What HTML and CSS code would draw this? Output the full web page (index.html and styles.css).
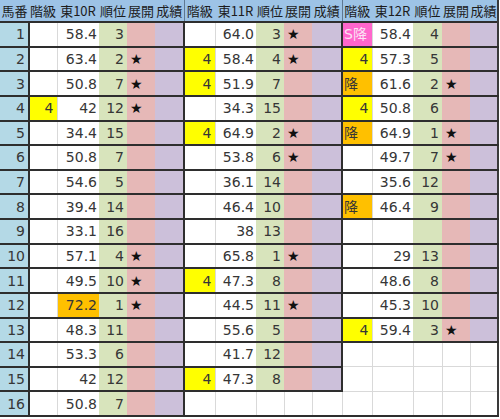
FILE: index.html
```html
<!DOCTYPE html>
<html lang="ja">
<head>
<meta charset="utf-8">
<title>馬番 表</title>
<link rel="stylesheet" href="styles.css">
</head>
<body>
<table class="sheet">
<colgroup>
<col class="w29"><col class="w28"><col class="w42"><col class="w28"><col class="w28"><col class="w29">
<col class="w31"><col class="w41"><col class="w28"><col class="w28"><col class="w30">
<col class="w30"><col class="w41"><col class="w29"><col class="w28"><col class="w28">
</colgroup>
<thead>
<tr>
<th>馬番</th><th>階級</th><th>東10R</th><th>順位</th><th>展開</th><th>成績</th>
<th class="b">階級</th><th>東11R</th><th>順位</th><th>展開</th><th>成績</th>
<th class="b">階級</th><th>東12R</th><th>順位</th><th>展開</th><th class="last">成績</th>
</tr>
</thead>
<tbody>
<tr>
<td class="n">1</td><td class="k"></td><td class="v">58.4</td><td class="r">3</td><td class="t"></td><td class="g"></td>
<td class="k"></td><td class="v">64.0</td><td class="r">3</td><td class="t">★</td><td class="g"></td>
<td class="k s">S降</td><td class="v">58.4</td><td class="r">4</td><td class="t"></td><td class="g last"></td>
</tr>
<tr>
<td class="n">2</td><td class="k"></td><td class="v">63.4</td><td class="r">2</td><td class="t">★</td><td class="g"></td>
<td class="k y">4</td><td class="v">58.4</td><td class="r">4</td><td class="t">★</td><td class="g"></td>
<td class="k y">4</td><td class="v">57.3</td><td class="r">5</td><td class="t"></td><td class="g last"></td>
</tr>
<tr>
<td class="n">3</td><td class="k"></td><td class="v">50.8</td><td class="r">7</td><td class="t">★</td><td class="g"></td>
<td class="k y">4</td><td class="v">51.9</td><td class="r">7</td><td class="t"></td><td class="g"></td>
<td class="k o">降</td><td class="v">61.6</td><td class="r">2</td><td class="t">★</td><td class="g last"></td>
</tr>
<tr>
<td class="n">4</td><td class="k y">4</td><td class="v">42</td><td class="r">12</td><td class="t">★</td><td class="g"></td>
<td class="k"></td><td class="v">34.3</td><td class="r">15</td><td class="t"></td><td class="g"></td>
<td class="k y">4</td><td class="v">50.8</td><td class="r">6</td><td class="t"></td><td class="g last"></td>
</tr>
<tr>
<td class="n">5</td><td class="k"></td><td class="v">34.4</td><td class="r">15</td><td class="t"></td><td class="g"></td>
<td class="k y">4</td><td class="v">64.9</td><td class="r">2</td><td class="t">★</td><td class="g"></td>
<td class="k o">降</td><td class="v">64.9</td><td class="r">1</td><td class="t">★</td><td class="g last"></td>
</tr>
<tr>
<td class="n">6</td><td class="k"></td><td class="v">50.8</td><td class="r">7</td><td class="t"></td><td class="g"></td>
<td class="k"></td><td class="v">53.8</td><td class="r">6</td><td class="t">★</td><td class="g"></td>
<td class="k"></td><td class="v">49.7</td><td class="r">7</td><td class="t">★</td><td class="g last"></td>
</tr>
<tr>
<td class="n">7</td><td class="k"></td><td class="v">54.6</td><td class="r">5</td><td class="t"></td><td class="g"></td>
<td class="k"></td><td class="v">36.1</td><td class="r">14</td><td class="t"></td><td class="g"></td>
<td class="k"></td><td class="v">35.6</td><td class="r">12</td><td class="t"></td><td class="g last"></td>
</tr>
<tr>
<td class="n">8</td><td class="k"></td><td class="v">39.4</td><td class="r">14</td><td class="t"></td><td class="g"></td>
<td class="k"></td><td class="v">46.4</td><td class="r">10</td><td class="t"></td><td class="g"></td>
<td class="k o">降</td><td class="v">46.4</td><td class="r">9</td><td class="t"></td><td class="g last"></td>
</tr>
<tr>
<td class="n">9</td><td class="k"></td><td class="v">33.1</td><td class="r">16</td><td class="t"></td><td class="g"></td>
<td class="k"></td><td class="v">38</td><td class="r">13</td><td class="t"></td><td class="g"></td>
<td class="k"></td><td class="v"></td><td class="r"></td><td class="t"></td><td class="g last"></td>
</tr>
<tr>
<td class="n">10</td><td class="k"></td><td class="v">57.1</td><td class="r">4</td><td class="t">★</td><td class="g"></td>
<td class="k"></td><td class="v">65.8</td><td class="r">1</td><td class="t">★</td><td class="g"></td>
<td class="k"></td><td class="v">29</td><td class="r">13</td><td class="t"></td><td class="g last"></td>
</tr>
<tr>
<td class="n">11</td><td class="k"></td><td class="v">49.5</td><td class="r">10</td><td class="t">★</td><td class="g"></td>
<td class="k y">4</td><td class="v">47.3</td><td class="r">8</td><td class="t"></td><td class="g"></td>
<td class="k"></td><td class="v">48.6</td><td class="r">8</td><td class="t"></td><td class="g last"></td>
</tr>
<tr>
<td class="n">12</td><td class="k"></td><td class="v o">72.2</td><td class="r">1</td><td class="t">★</td><td class="g"></td>
<td class="k"></td><td class="v">44.5</td><td class="r">11</td><td class="t">★</td><td class="g"></td>
<td class="k"></td><td class="v">45.3</td><td class="r">10</td><td class="t"></td><td class="g last"></td>
</tr>
<tr>
<td class="n">13</td><td class="k"></td><td class="v">48.3</td><td class="r">11</td><td class="t"></td><td class="g"></td>
<td class="k"></td><td class="v">55.6</td><td class="r">5</td><td class="t"></td><td class="g"></td>
<td class="k y">4</td><td class="v">59.4</td><td class="r">3</td><td class="t">★</td><td class="g last"></td>
</tr>
<tr>
<td class="n">14</td><td class="k"></td><td class="v">53.3</td><td class="r">6</td><td class="t"></td><td class="g"></td>
<td class="k"></td><td class="v">41.7</td><td class="r">12</td><td class="t"></td><td class="g"></td>
<td class="e"></td><td class="e"></td><td class="e"></td><td class="e"></td><td class="e last"></td>
</tr>
<tr>
<td class="n">15</td><td class="k"></td><td class="v">42</td><td class="r">12</td><td class="t"></td><td class="g"></td>
<td class="k y">4</td><td class="v">47.3</td><td class="r">8</td><td class="t"></td><td class="g"></td>
<td class="e"></td><td class="e"></td><td class="e"></td><td class="e"></td><td class="e last"></td>
</tr>
<tr class="end">
<td class="n">16</td><td class="k"></td><td class="v">50.8</td><td class="r">7</td><td class="t"></td><td class="g"></td>
<td class="e"></td><td class="e"></td><td class="e"></td><td class="e"></td><td class="e"></td>
<td class="e"></td><td class="e"></td><td class="e"></td><td class="e"></td><td class="e last"></td>
</tr>
</tbody>
</table>
</body>
</html>
```

FILE: styles.css
```css
html, body {
  margin: 0;
  padding: 0;
  background: #ffffff;
}

.sheet {
  border-collapse: collapse;
  table-layout: fixed;
  width: 498px;
  font-family: "DejaVu Sans", "Noto Sans CJK JP", sans-serif;
  font-size: 14px;
  color: #363636;
}

.w28 { width: 28px; }
.w29 { width: 29px; }
.w30 { width: 30px; }
.w31 { width: 31px; }
.w41 { width: 41px; }
.w42 { width: 42px; }

.sheet thead tr {
  height: 22px;
}

.sheet th {
  background: #9dc3e6;
  font-family: "Noto Sans CJK JP", "DejaVu Sans", sans-serif;
  font-weight: normal;
  font-size: 13px;
  color: #1c1c1c;
  text-align: center;
  padding: 0;
  white-space: nowrap;
  overflow: hidden;
  border-bottom: 1px solid #7f9fbf;
}

.sheet th.b {
  border-left: 1px solid #5f7891;
}

.sheet th.last {
  border-right: 2px solid #3a3a3a;
}

.sheet tbody tr {
  height: 24.625px;
}

.sheet td {
  padding: 0 3px 0 2px;
  white-space: nowrap;
  overflow: hidden;
  text-align: right;
  vertical-align: middle;
  line-height: 16px;
  border-top: 2px solid #2e2e2e;
  border-bottom: 2px solid #2e2e2e;
}

.sheet td.n {
  background: #b4d9e6;
  border-right: 2px solid #2e2e2e;
}

.sheet td.k {
  background: #ffffff;
  border-left: 2px solid #2e2e2e;
  border-right: 1px solid #d9d9d9;
}

.sheet td.n + td.k {
  border-left: 2px solid #2e2e2e;
}

.sheet td.k.y {
  background: #ffff00;
}

.sheet td.k.o {
  background: #ffc000;
  text-align: left;
  padding-left: 1px;
}

.sheet td.k.s {
  background: #ff66cc;
  color: #fbe3f4;
  text-align: left;
  padding-left: 1px;
}

.sheet td.v {
  background: #ffffff;
  padding-right: 2px;
}

.sheet td.v.o {
  background: #ffc000;
}

.sheet td.r {
  background: #d8e4bc;
}

.sheet td.t {
  background: #e6b8b7;
  text-align: left;
  padding-left: 3px;
  color: #111111;
}

.sheet td.g {
  background: #ccc0da;
  border-right: 2px solid #2e2e2e;
}

.sheet td.e {
  background: #ffffff;
  border: 1px solid #d9d9d9;
}

.sheet td.last {
  border-right: 2px solid #3a3a3a;
}

.sheet tr.end td {
  border-bottom: 2px solid #2e2e2e;
}
```
